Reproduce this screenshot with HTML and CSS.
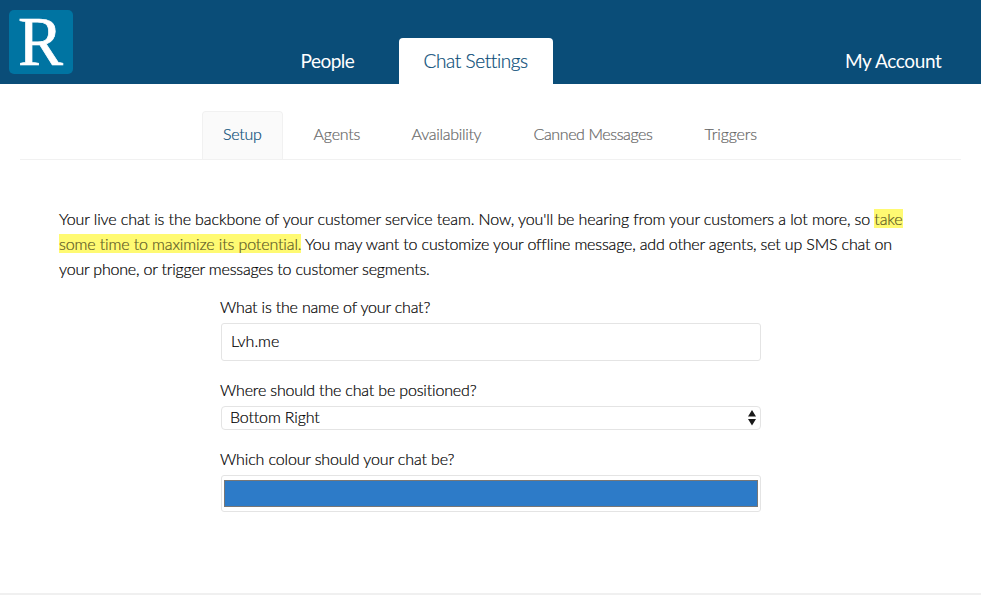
FILE: index.html
```html
<!DOCTYPE html>
<html lang="en">
<head>
<meta charset="utf-8">
<title>Chat Settings</title>
<link rel="stylesheet" href="styles.css">
</head>
<body>
<header class="topbar">
  <a class="logo"><svg width="64" height="64" viewBox="0 0 64 64"><rect width="64" height="64" rx="5" fill="#0074a2"/><text x="9" y="54.5" textLength="45" lengthAdjust="spacingAndGlyphs" class="logo-letter">R</text></svg></a>
  <nav class="main-nav">
    <a class="main-tab people"><span>People</span></a>
    <a class="main-tab active"><span>Chat Settings</span></a>
  </nav>
  <a class="account"><span>My Account</span></a>
</header>
<nav class="sub-nav">
  <a class="sub-tab active"><span>Setup</span></a>
  <a class="sub-tab agents"><span>Agents</span></a>
  <a class="sub-tab availability"><span>Availability</span></a>
  <a class="sub-tab canned"><span>Canned Messages</span></a>
  <a class="sub-tab triggers"><span>Triggers</span></a>
</nav>
<main>
  <p class="intro"><span class="l1">Your live chat is the backbone of your customer service team. Now, you'll be hearing from your customers a lot more, so <mark>take</mark></span><br><span class="l2"><mark>some time to maximize its potential.</mark> You may want to customize your offline message, add other agents, set up SMS chat on</span><br><span class="l3">your phone, or trigger messages to customer segments.</span></p>
  <form class="settings">
    <label class="q1"><span>What is the name of your chat?</span></label>
    <div class="field name"><span>Lvh.me</span></div>
    <label class="q2"><span>Where should the chat be positioned?</span></label>
    <div class="field select"><span>Bottom Right</span><svg width="8" height="16" viewBox="0 0 8 16"><path d="M4 0L8 6.5H0ZM0 9H8L4 15.5Z" fill="#1a1a1a"/></svg></div>
    <label class="q3"><span>Which colour should your chat be?</span></label>
    <div class="field color"><div class="swatch"></div></div>
  </form>
</main>
<footer></footer>
</body>
</html>
```

FILE: styles.css
```css
* { box-sizing: border-box; }
body { margin: 0; height: 595px; overflow: hidden; display: flex; flex-direction: column; background: #fff; color: #000; font: 300 16px/25px Lato, "Open Sans", sans-serif; font-variant-ligatures: none; -webkit-text-stroke: 0.2px; }
.topbar { height: 84px; flex: none; background: #0a4d78; display: flex; align-items: flex-end; font-size: 19px; color: #fff; }
.logo { width: 64px; height: 64px; margin: 0 0 10px 9px; }
.logo svg { display: block; overflow: visible; }
.logo-letter { font-family: "Liberation Serif", serif; font-weight: 400; font-size: 69px; fill: #fff; stroke: #fff; stroke-width: 0.7px; }
.main-nav { display: flex; margin-left: 183px; }
.main-tab { height: 46px; line-height: 46px; white-space: nowrap; }
.people { width: 143px; padding-left: 44.5px; font-weight: 400; letter-spacing: -0.5px; -webkit-text-stroke: 0; }
.main-tab.active { width: 154px; padding-left: 24.5px; background: #fff; color: #0a4d78; border-radius: 4px 4px 0 0; letter-spacing: -0.4px; }
.account { margin-left: auto; width: 136px; height: 46px; line-height: 46px; font-weight: 400; white-space: nowrap; letter-spacing: -0.35px; -webkit-text-stroke: 0; }
.sub-nav { flex: none; height: 49px; margin: 27px 20px 0; padding-left: 182px; border-bottom: 1px solid #f1f1f1; display: flex; color: #666; }
.sub-tab { line-height: 46px; white-space: nowrap; letter-spacing: -0.25px; }
.sub-tab.active { width: 81px; height: 48px; padding-left: 20px; line-height: 44px; background: #fafafa; border: 1px solid #f1f1f1; border-bottom: 0; border-radius: 4px 4px 0 0; color: #0a4d78; }
.agents { width: 98px; margin-left: 30.6px; }
.availability { width: 122px; letter-spacing: -0.3px; }
.canned { width: 171px; letter-spacing: -0.4px; }
.triggers { letter-spacing: -0.15px; }
main { padding: 46px 59px 0; }
.intro { margin: 0; white-space: nowrap; }
.l1 { letter-spacing: -0.1px; }
.l2 { letter-spacing: -0.165px; }
.l2 mark { letter-spacing: -0.12px; }
.l3 { letter-spacing: -0.19px; }
mark { background: #fffa72; color: #5c5926; }
.settings { width: 541px; margin: 13px 0 0 161px; display: flex; flex-direction: column; }
label { height: 28px; line-height: 25px; white-space: nowrap; }
.q1 { height: 29px; letter-spacing: -0.19px; }
.q2 { height: 29px; letter-spacing: -0.17px; }
.q3 { height: 29px; letter-spacing: -0.14px; }
.field { width: 540px; margin-left: 1px; border: 1px solid #e4e4e4; border-radius: 3px; }
.name { height: 38px; padding-left: 9px; line-height: 34px; margin-bottom: 16px; }
.select { height: 24px; padding: 0 4px 0 8px; line-height: 20px; border-radius: 4px; display: flex; justify-content: space-between; margin-bottom: 16px; letter-spacing: -0.15px; }
.select svg { margin-top: 3px; }
.color { height: 37px; padding: 4px 2px; }
.swatch { height: 27px; background: #2d7bc8; border: 1px solid #777; }
footer { margin-top: auto; height: 2px; background: #f0f0f0; }
```
